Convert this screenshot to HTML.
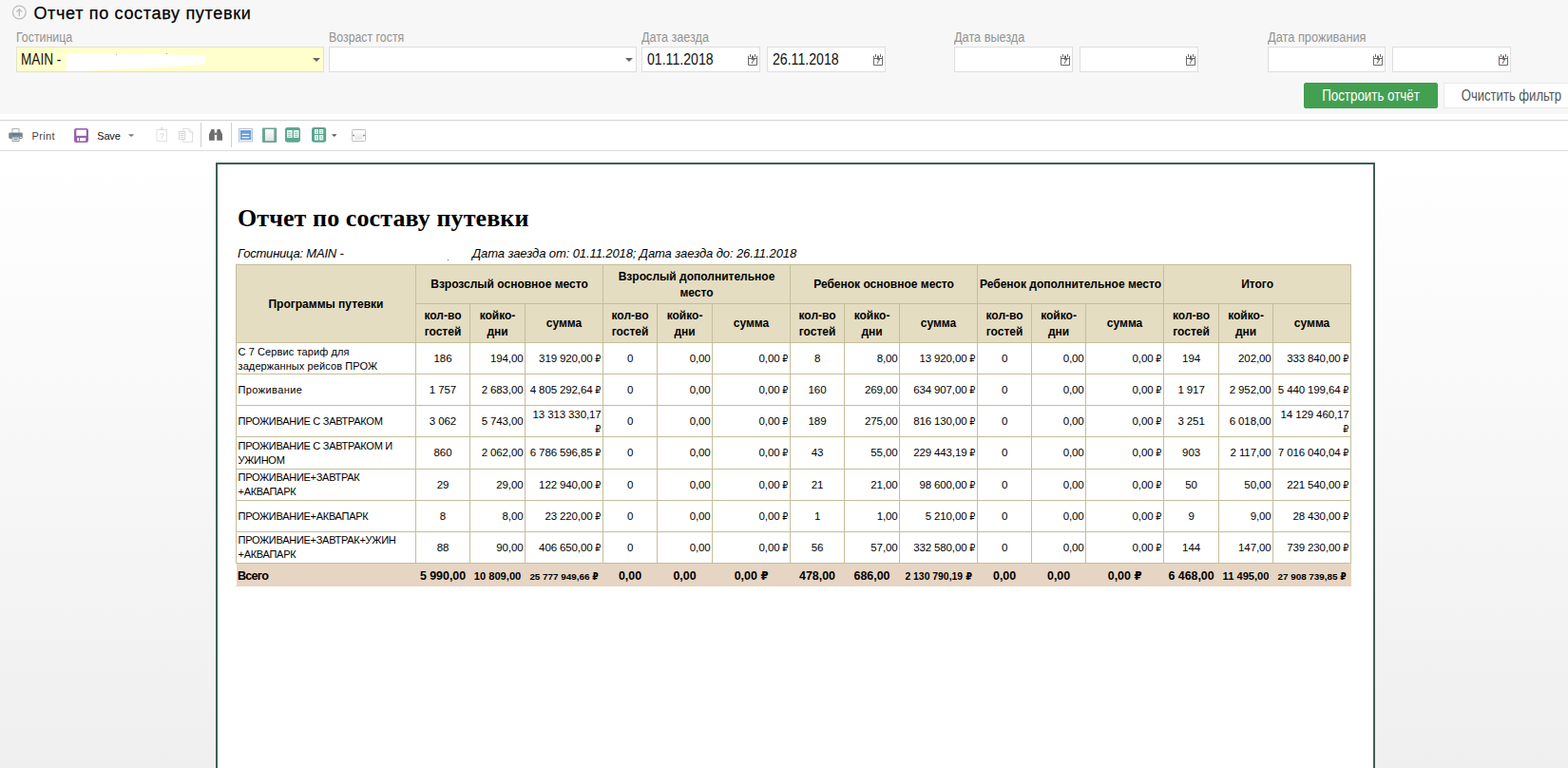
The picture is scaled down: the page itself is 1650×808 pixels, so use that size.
<!DOCTYPE html>
<html lang="ru">
<head>
<meta charset="utf-8">
<title>Отчет по составу путевки</title>
<style>
*{box-sizing:border-box}
html,body{margin:0;padding:0;width:1650px;height:808px;overflow:hidden}
#root{position:relative;width:1650px;height:808px;overflow:hidden;background:#fefefe}
body{width:1650px;height:808px;overflow:hidden;background:#fefefe;font-family:"Liberation Sans","DejaVu Sans",sans-serif;color:#111;position:relative}
.abs{position:absolute}
.nx{display:inline-block;white-space:nowrap;transform-origin:0 50%}
/* filter panel */
#panel{left:0;top:0;width:1650px;height:120px;background:#f7f7f7}
#ptitle{left:35.4px;top:3px;font-size:18px;line-height:22px;color:#000;white-space:nowrap;letter-spacing:.68px;-webkit-text-stroke:.25px #000}
.lbl{top:31px;font-size:14px;line-height:16px;color:#939393;white-space:nowrap}
.lbl .nx{transform:scaleX(.882)}
.fld{top:49px;height:27px;background:#fff;border:1px solid #dedede}
.fld.y{background:#ffffcc;border-color:#e3e3c4}
.fld .v{position:absolute;left:5px;top:4px;font-size:16px;line-height:18px;color:#111}
.fld .v .nx{transform:scaleX(.882)}
.caret{position:absolute;right:3.5px;top:11px;width:0;height:0;border-left:4px solid transparent;border-right:4px solid transparent;border-top:4px solid #666}
.cal{opacity:.999;position:absolute;left:111px;top:6px;width:11px;height:14px}
.btn{top:87px;height:27px;font-size:16px;line-height:25px;text-align:center;white-space:nowrap}
#b1{left:1372px;width:141px;background:#43a051;border:1px solid #3f9a4d;border-radius:2px;color:#fff}
#b2{left:1519px;width:143px;background:#fff;border:1px solid #eaeaea;color:#555}
.btn .nx{transform:scaleX(.835);transform-origin:50% 50%}
#b2 .nx{transform:scaleX(.817)}
/* toolbar */
#tb{left:0;top:120px;width:1650px;height:39px;background:#fff}
#tb .l1{left:0;top:6px;width:1650px;height:1px;background:#d4d4d4}
#tb .l2{left:0;top:38px;width:1650px;height:1px;background:#dcdcdc}
.tbt{font-size:11px;line-height:14px;color:#444;top:16px;white-space:nowrap}
.sep{top:9px;width:1px;height:26px;background:#d0d0d0}
/* page */
#bgv{left:0;top:159px;width:1650px;height:649px;background:linear-gradient(to bottom,#fff 0,#efefef 100%)}
#page{left:227px;top:171px;width:1220px;height:700px;background:#fff;border:2px solid #3f5e57}
#rtitle{left:250px;top:215px;letter-spacing:.1px;font-family:"Liberation Serif",serif;font-weight:bold;font-size:26px;line-height:30px;color:#000;white-space:nowrap}
.sub{top:259px;font-style:italic;font-size:13px;line-height:16px;color:#000;white-space:nowrap}
table{position:absolute;left:248px;top:278px;width:1174px;border-collapse:collapse;table-layout:fixed;font-size:12px;color:#000}
td,th{border:1px solid #c5be9a;padding:0 2px;overflow:hidden;white-space:nowrap;vertical-align:middle;line-height:15px}
th{background:#e4ddc2;font-weight:bold;text-align:center;font-size:12px;line-height:17px;padding-top:1px}
td.n{text-align:left;font-size:11px;line-height:15px;padding-left:1.5px;letter-spacing:-.28px}
td.n.l2{padding-top:2px}
td i{font-style:normal;font-size:.98em;line-height:1;letter-spacing:0;display:inline-block;transform:scaleX(.84);transform-origin:100% 50%;margin-left:-1.2px}
tr.t td i{transform:scaleX(.95);margin-left:-.4px}
td.c{text-align:center;font-size:11.5px;letter-spacing:-.1px;padding-top:0}
td.r{text-align:right;font-size:11.5px;letter-spacing:-.12px;padding-right:1.5px;padding-top:0}
tr.d{height:33px}
tr.t{height:24px}
tr.t td{background:#e6d5c3;border-color:#e6d5c3;font-weight:bold;text-align:center;font-size:12.4px;padding:3px 0 0}
tr.t td.a{border-left-color:#fff;text-align:left;padding-left:1px;letter-spacing:-.75px;font-size:12.6px}
tr.t td.m{font-size:11.15px}
tr.t td.s{font-size:9.9px}
tr.t td.s2{font-size:10.4px}
</style>
</head>
<body>
<div id="root">
<div id="panel" class="abs">
  <svg class="abs" style="left:12px;top:5px" width="16" height="16" viewBox="0 0 16 16"><circle cx="8.3" cy="8" r="6.9" fill="none" stroke="#bdbdbd" stroke-width="1.3"/><path d="M8.3 12V4.8M5.4 7.6l2.9-2.9 2.9 2.9" fill="none" stroke="#bcbcbc" stroke-width="1.3"/></svg>
  <div id="ptitle" class="abs">Отчет по составу путевки</div>
  <div class="lbl abs" style="left:17.2px"><span class="nx">Гостиница</span></div>
  <div class="lbl abs" style="left:346.2px"><span class="nx">Возраст гостя</span></div>
  <div class="lbl abs" style="left:675.2px"><span class="nx" style="transform:scaleX(.903)">Дата заезда</span></div>
  <div class="lbl abs" style="left:1004.2px"><span class="nx" style="transform:scaleX(.907)">Дата выезда</span></div>
  <div class="lbl abs" style="left:1333.6px"><span class="nx" style="transform:scaleX(.914)">Дата проживания</span></div>
  <div class="fld y abs" style="left:17px;width:324px"><span class="v" style="left:4px"><span class="nx" style="transform:scaleX(.85)">MAIN -</span></span><svg class="abs" style="left:51px;top:5px" width="150" height="22" viewBox="69 55 150 22"><path d="M70 56.6Q70 56.2 71 56.2L120 56.5 170 57.2 214 58.4Q215.6 58.6 215.6 60V66.4Q215.6 67.6 213 67.8L190 69.6 150 71.6 110 73.2 86 75H70z" fill="#fff"/></svg><span class="caret"></span></div>
  <div class="fld abs" style="left:346px;width:324px"><span class="caret"></span></div>
  <div class="fld abs" style="left:675px;width:125px"><span class="v"><span class="nx">01.11.2018</span></span><svg class="cal" viewBox="0 0 11 14"><path d="M.5 2.8v9.7h9V2.8M.5 5.5h9" fill="#fff" stroke="#6b6b6b" stroke-width="1"/><rect x="2" y="1" width="1" height="3" fill="#6b6b6b"/><rect x="7" y="1" width="1" height="3" fill="#6b6b6b"/><rect x="4" y="2.6" width="2" height="2.6" fill="#6b6b6b"/><text x="5" y="11.2" font-family="Liberation Sans,sans-serif" font-size="6.4" font-weight="bold" font-style="italic" text-anchor="middle" fill="#555">7</text></svg></div>
  <div class="fld abs" style="left:807px;width:125px"><span class="v"><span class="nx">26.11.2018</span></span><svg class="cal" viewBox="0 0 11 14"><path d="M.5 2.8v9.7h9V2.8M.5 5.5h9" fill="#fff" stroke="#6b6b6b" stroke-width="1"/><rect x="2" y="1" width="1" height="3" fill="#6b6b6b"/><rect x="7" y="1" width="1" height="3" fill="#6b6b6b"/><rect x="4" y="2.6" width="2" height="2.6" fill="#6b6b6b"/><text x="5" y="11.2" font-family="Liberation Sans,sans-serif" font-size="6.4" font-weight="bold" font-style="italic" text-anchor="middle" fill="#555">7</text></svg></div>
  <div class="fld abs" style="left:1004px;width:125px"><svg class="cal" viewBox="0 0 11 14"><path d="M.5 2.8v9.7h9V2.8M.5 5.5h9" fill="#fff" stroke="#6b6b6b" stroke-width="1"/><rect x="2" y="1" width="1" height="3" fill="#6b6b6b"/><rect x="7" y="1" width="1" height="3" fill="#6b6b6b"/><rect x="4" y="2.6" width="2" height="2.6" fill="#6b6b6b"/><text x="5" y="11.2" font-family="Liberation Sans,sans-serif" font-size="6.4" font-weight="bold" font-style="italic" text-anchor="middle" fill="#555">7</text></svg></div>
  <div class="fld abs" style="left:1136px;width:125px"><svg class="cal" viewBox="0 0 11 14"><path d="M.5 2.8v9.7h9V2.8M.5 5.5h9" fill="#fff" stroke="#6b6b6b" stroke-width="1"/><rect x="2" y="1" width="1" height="3" fill="#6b6b6b"/><rect x="7" y="1" width="1" height="3" fill="#6b6b6b"/><rect x="4" y="2.6" width="2" height="2.6" fill="#6b6b6b"/><text x="5" y="11.2" font-family="Liberation Sans,sans-serif" font-size="6.4" font-weight="bold" font-style="italic" text-anchor="middle" fill="#555">7</text></svg></div>
  <div class="fld abs" style="left:1334px;width:124px"><svg class="cal" style="left:110px" viewBox="0 0 11 14"><path d="M.5 2.8v9.7h9V2.8M.5 5.5h9" fill="#fff" stroke="#6b6b6b" stroke-width="1"/><rect x="2" y="1" width="1" height="3" fill="#6b6b6b"/><rect x="7" y="1" width="1" height="3" fill="#6b6b6b"/><rect x="4" y="2.6" width="2" height="2.6" fill="#6b6b6b"/><text x="5" y="11.2" font-family="Liberation Sans,sans-serif" font-size="6.4" font-weight="bold" font-style="italic" text-anchor="middle" fill="#555">7</text></svg></div>
  <div class="fld abs" style="left:1465px;width:125px"><svg class="cal" viewBox="0 0 11 14"><path d="M.5 2.8v9.7h9V2.8M.5 5.5h9" fill="#fff" stroke="#6b6b6b" stroke-width="1"/><rect x="2" y="1" width="1" height="3" fill="#6b6b6b"/><rect x="7" y="1" width="1" height="3" fill="#6b6b6b"/><rect x="4" y="2.6" width="2" height="2.6" fill="#6b6b6b"/><text x="5" y="11.2" font-family="Liberation Sans,sans-serif" font-size="6.4" font-weight="bold" font-style="italic" text-anchor="middle" fill="#555">7</text></svg></div>
  <div id="b1" class="btn abs"><span class="nx">Построить отчёт</span></div>
  <div id="b2" class="btn abs"><span class="nx">Очистить фильтр</span></div>
</div>
<svg width="0" height="0" style="position:absolute"><defs>
  <linearGradient id="gpg" x1="0" y1="0" x2="0" y2="1"><stop offset="0" stop-color="#fff"/><stop offset="1" stop-color="#dfe1e3"/></linearGradient>
</defs></svg>
<div id="tb" class="abs">
  <div class="l1 abs"></div><div class="l2 abs"></div>
  <div class="tbt abs" style="left:33.5px;letter-spacing:.35px">Print</div>
  <div class="tbt abs" style="left:102.3px;color:#111;letter-spacing:-.2px">Save</div>
  <div class="sep abs" style="left:211px"></div>
  <div class="sep abs" style="left:243px"></div>
  <svg class="abs" style="left:0;top:6px" width="400" height="34" viewBox="0 126 400 34">
    <!-- printer -->
    <rect x="13" y="135.5" width="7" height="5" fill="#fff" stroke="#aeb2b5" stroke-width="1"/>
    <rect x="9.2" y="139.4" width="14.6" height="6.6" rx="1.4" fill="#80868a"/>
    <rect x="12.6" y="140" width="7.8" height="2.2" fill="#4b80b8"/>
    <rect x="13" y="144.3" width="7" height="4.2" fill="#fff" stroke="#9ea3a7" stroke-width="1"/>
    <rect x="14.3" y="145.6" width="4.4" height="1.6" fill="#8a8fa0"/>
    <rect x="21.2" y="144" width="1.6" height="1" fill="#fff"/>
    <!-- save -->
    <rect x="78" y="135" width="15" height="15" rx="2.2" fill="#9a60ae"/>
    <rect x="80.3" y="136.6" width="10.5" height="6.2" fill="#fff"/>
    <rect x="81.3" y="145" width="8.8" height="3.4" fill="#fff"/>
    <rect x="83" y="145" width="1.1" height="3.4" fill="#9a60ae"/>
    <path d="M135 141.2h6.2l-3.1 2.8z" fill="#777"/>
    <!-- disabled paste -->
    <rect x="165" y="136.5" width="10.5" height="12" fill="#fff" stroke="#e2e2e2" stroke-width="1"/>
    <path d="M167.5 136.5h5.5M169.5 134.5h1.5v2h-1.5z" stroke="#dcdcdc" stroke-width="1" fill="none"/>
    <text x="170.3" y="146.3" font-family="Liberation Sans,sans-serif" font-size="9" text-anchor="middle" fill="#cfd8e0">?</text>
    <!-- disabled copy -->
    <path d="M192.5 135.5h6.5l3.5 3.5v10.3h-10z" fill="#fff" stroke="#dedede" stroke-width="1"/>
    <path d="M199 135.5v3.5h3.5" fill="none" stroke="#dedede" stroke-width="1"/>
    <rect x="188.5" y="138.5" width="6.2" height="8" fill="#fff" stroke="#d6d6d6" stroke-width="1"/>
    <path d="M190 140.5h3.4M190 142.5h3.4M190 144.5h3.4" stroke="#d2d2d2" stroke-width="1"/>
    <!-- binoculars -->
    <path d="M222.4 136h3l.4 2.4v9.4h-5.8v-6.6l1.4-2.8zM228.6 136h3l1 2.4 1.4 2.8v6.6h-5.8v-9.4z" fill="#6d6d6d"/>
    <rect x="225.5" y="139.6" width="3" height="2.4" fill="#777"/>
    <!-- view icon A (blue) -->
    <rect x="251.5" y="135.5" width="14" height="13.4" fill="#fff" stroke="#b9c2d6" stroke-width="1"/>
    <rect x="252.8" y="137" width="11.5" height="10.2" fill="#6c9cd9"/>
    <path d="M254.6 141.4h7.6M254.6 144.6h7.6" stroke="#eef4fc" stroke-width="1.1"/>
    <!-- view icon B -->
    <rect x="276" y="134.6" width="15.2" height="15.3" rx=".8" fill="#6ba594"/>
    <rect x="279" y="136" width="9.3" height="12.2" fill="url(#gpg)"/>
    <!-- view icon C -->
    <rect x="300" y="134" width="16" height="15.7" rx="2.6" fill="#5ba891"/>
    <rect x="302" y="137" width="5.7" height="7.9" fill="#e9fbf6"/>
    <rect x="309" y="137" width="5.5" height="7.9" fill="#e9fbf6"/>
    <path d="M303 139.3h3.6M303 141.3h3.6M303 143.3h3.6M310 139.3h3.4M310 141.3h3.4M310 143.3h3.4" stroke="#8fb5aa" stroke-width=".9"/>
    <!-- view icon D -->
    <rect x="328" y="134" width="15.2" height="15.7" rx="2.4" fill="#5ba38d"/>
    <rect x="331" y="136" width="4" height="4.9" fill="#eafaf6"/><rect x="336" y="136" width="4.2" height="4.9" fill="#eafaf6"/>
    <rect x="331" y="142" width="4" height="5.5" fill="#eafaf6"/><rect x="336" y="142" width="4.2" height="5.5" fill="#eafaf6"/>
    <path d="M332 137.6h2.1M332 139.4h2.1M337 137.6h2.2M337 139.4h2.2M332 143.8h2.1M332 145.6h2.1M337 143.8h2.2M337 145.6h2.2" stroke="#97bfb3" stroke-width=".9"/>
    <path d="M349 141.2h5.6l-2.8 2.8z" fill="#555"/>
    <!-- fit width -->
    <rect x="370.6" y="136.4" width="14" height="12.2" rx="1.2" fill="#fff" stroke="#bdbdbd" stroke-width="1"/>
    <rect x="373.6" y="138.2" width="7.8" height="8.6" fill="url(#gpg)"/>
    <path d="M372.8 141.3l-1.8 1.2 1.8 1.2zM382.3 141.3l1.8 1.2-1.8 1.2z" fill="#5a6a8a"/>
  </svg>
</div>
<div id="bgv" class="abs"></div>
<div id="page" class="abs"></div>
<div id="rtitle" class="abs">Отчет по составу путевки</div>
<div class="sub abs" style="left:250px;letter-spacing:-.2px">Гостиница: MAIN -</div>
<div class="sub abs" style="left:497px;letter-spacing:-.1px">Дата заезда от: 01.11.2018; Дата заезда до: 26.11.2018</div>
<div class="abs" style="left:471px;top:273px;width:1px;height:1px;background:#666"></div>
<div class="abs" style="left:122px;top:57px;width:1px;height:1px;background:#b9b9a0"></div>
<div class="abs" style="left:175px;top:56px;width:1px;height:1px;background:#a5a590"></div>
<table>
<colgroup><col style="width:189px"><col style="width:57px"><col style="width:58px"><col style="width:82px"><col style="width:57px"><col style="width:58px"><col style="width:82px"><col style="width:57px"><col style="width:58px"><col style="width:82px"><col style="width:57px"><col style="width:57px"><col style="width:82px"><col style="width:58px"><col style="width:57px"><col style="width:82px"></colgroup>
<tr style="height:41px"><th rowspan="2">Программы путевки</th><th colspan="3">Взрозслый основное место</th><th colspan="3" style="white-space:normal">Взрослый дополнительное место</th><th colspan="3">Ребенок основное место</th><th colspan="3" style="padding:0">Ребенок дополнительное место</th><th colspan="3">Итого</th></tr>
<tr style="height:41px"><th>кол-во<br>гостей</th><th>койко-<br>дни</th><th>сумма</th><th>кол-во<br>гостей</th><th>койко-<br>дни</th><th>сумма</th><th>кол-во<br>гостей</th><th>койко-<br>дни</th><th>сумма</th><th>кол-во<br>гостей</th><th>койко-<br>дни</th><th>сумма</th><th>кол-во<br>гостей</th><th>койко-<br>дни</th><th>сумма</th></tr>
<tr class="d"><td class="n l2" style="letter-spacing:.1px">С 7 Сервис тариф для<br>задержанных рейсов ПРОЖ</td><td class="c">186</td><td class="r">194,00</td><td class="r">319 920,00 <i>₽</i></td><td class="c">0</td><td class="r">0,00</td><td class="r">0,00 <i>₽</i></td><td class="c">8</td><td class="r">8,00</td><td class="r">13 920,00 <i>₽</i></td><td class="c">0</td><td class="r">0,00</td><td class="r">0,00 <i>₽</i></td><td class="c">194</td><td class="r">202,00</td><td class="r">333 840,00 <i>₽</i></td></tr>
<tr class="d"><td class="n" style="letter-spacing:.4px">Проживание</td><td class="c">1 757</td><td class="r">2 683,00</td><td class="r">4 805 292,64 <i>₽</i></td><td class="c">0</td><td class="r">0,00</td><td class="r">0,00 <i>₽</i></td><td class="c">160</td><td class="r">269,00</td><td class="r">634 907,00 <i>₽</i></td><td class="c">0</td><td class="r">0,00</td><td class="r">0,00 <i>₽</i></td><td class="c">1 917</td><td class="r">2 952,00</td><td class="r">5 440 199,64 <i>₽</i></td></tr>
<tr class="d"><td class="n">ПРОЖИВАНИЕ С ЗАВТРАКОМ</td><td class="c">3 062</td><td class="r">5 743,00</td><td class="r" style="padding-top:2px">13 313 330,17<br><i>₽</i></td><td class="c">0</td><td class="r">0,00</td><td class="r">0,00 <i>₽</i></td><td class="c">189</td><td class="r">275,00</td><td class="r">816 130,00 <i>₽</i></td><td class="c">0</td><td class="r">0,00</td><td class="r">0,00 <i>₽</i></td><td class="c">3 251</td><td class="r">6 018,00</td><td class="r" style="padding-top:2px">14 129 460,17<br><i>₽</i></td></tr>
<tr class="d" style="height:34px"><td class="n">ПРОЖИВАНИЕ С ЗАВТРАКОМ И<br>УЖИНОМ</td><td class="c">860</td><td class="r">2 062,00</td><td class="r">6 786 596,85 <i>₽</i></td><td class="c">0</td><td class="r">0,00</td><td class="r">0,00 <i>₽</i></td><td class="c">43</td><td class="r">55,00</td><td class="r">229 443,19 <i>₽</i></td><td class="c">0</td><td class="r">0,00</td><td class="r">0,00 <i>₽</i></td><td class="c">903</td><td class="r">2 117,00</td><td class="r">7 016 040,04 <i>₽</i></td></tr>
<tr class="d"><td class="n">ПРОЖИВАНИЕ+ЗАВТРАК<br>+АКВАПАРК</td><td class="c">29</td><td class="r">29,00</td><td class="r">122 940,00 <i>₽</i></td><td class="c">0</td><td class="r">0,00</td><td class="r">0,00 <i>₽</i></td><td class="c">21</td><td class="r">21,00</td><td class="r">98 600,00 <i>₽</i></td><td class="c">0</td><td class="r">0,00</td><td class="r">0,00 <i>₽</i></td><td class="c">50</td><td class="r">50,00</td><td class="r">221 540,00 <i>₽</i></td></tr>
<tr class="d"><td class="n">ПРОЖИВАНИЕ+АКВАПАРК</td><td class="c">8</td><td class="r">8,00</td><td class="r">23 220,00 <i>₽</i></td><td class="c">0</td><td class="r">0,00</td><td class="r">0,00 <i>₽</i></td><td class="c">1</td><td class="r">1,00</td><td class="r">5 210,00 <i>₽</i></td><td class="c">0</td><td class="r">0,00</td><td class="r">0,00 <i>₽</i></td><td class="c">9</td><td class="r">9,00</td><td class="r">28 430,00 <i>₽</i></td></tr>
<tr class="d"><td class="n">ПРОЖИВАНИЕ+ЗАВТРАК+УЖИН<br>+АКВАПАРК</td><td class="c">88</td><td class="r">90,00</td><td class="r">406 650,00 <i>₽</i></td><td class="c">0</td><td class="r">0,00</td><td class="r">0,00 <i>₽</i></td><td class="c">56</td><td class="r">57,00</td><td class="r">332 580,00 <i>₽</i></td><td class="c">0</td><td class="r">0,00</td><td class="r">0,00 <i>₽</i></td><td class="c">144</td><td class="r">147,00</td><td class="r">739 230,00 <i>₽</i></td></tr>
<tr class="t"><td class="a">Всего</td><td class="b">5 990,00</td><td class="m">10 809,00</td><td class="s">25 777 949,66 <i>₽</i></td><td class="b">0,00</td><td class="b">0,00</td><td class="b">0,00 <i>₽</i></td><td class="b">478,00</td><td class="b">686,00</td><td class="s2">2 130 790,19 <i>₽</i></td><td class="b">0,00</td><td class="b">0,00</td><td class="b">0,00 <i>₽</i></td><td class="b">6 468,00</td><td class="m">11 495,00</td><td class="s">27 908 739,85 <i>₽</i></td></tr>
</table>
</div>
</body>
</html>
